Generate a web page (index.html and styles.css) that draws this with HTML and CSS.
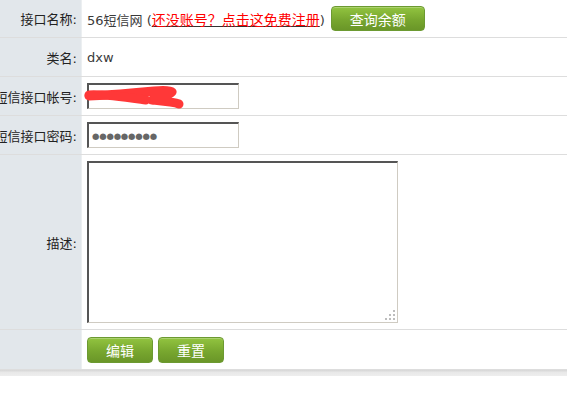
FILE: index.html
```html
<!DOCTYPE html>
<html lang="zh-CN">
<head>
<meta charset="utf-8">
<title>接口设置</title>
<link rel="stylesheet" href="styles.css">
</head>
<body>
<div class="form">
  <div class="row r1">
    <div class="label">接口名称:</div>
    <div class="field">
      <span class="value">56短信网 (<a class="reg" href="#"><span class="red">还没账号？点击这免费注册</span></a>)</span>
      <button class="btn btn-wide" type="button">查询余额</button>
    </div>
  </div>
  <div class="row r2">
    <div class="label">类名:</div>
    <div class="field"><span class="value">dxw</span></div>
  </div>
  <div class="row r3">
    <div class="label">短信接口帐号:</div>
    <div class="field">
      <div class="inwrap">
        <input class="txt" type="text" value="">
        <svg class="scribble" width="110" height="30" viewBox="0 0 110 30">
          <path d="M5 13 C 25 12, 50 10, 70 8 C 80 7, 86 7, 88 9 C 86 12, 75 15, 68 17 C 78 18, 90 19, 95 21" fill="none" stroke="#ff3838" stroke-width="9" stroke-linecap="round" stroke-linejoin="round"/>
          <path d="M5 12 C 20 11, 40 14, 62 17" fill="none" stroke="#ff3838" stroke-width="9" stroke-linecap="round"/>
        </svg>
      </div>
    </div>
  </div>
  <div class="row r4">
    <div class="label">短信接口密码:</div>
    <div class="field"><input class="txt pwd" type="text" readonly value="●●●●●●●●●"></div>
  </div>
  <div class="row r5">
    <div class="label">描述:</div>
    <div class="field">
      <div class="areawrap">
        <textarea class="area"></textarea>
        <svg class="grip" width="12" height="12" viewBox="0 0 12 12">
          <rect x="9" y="1" width="2" height="2" fill="#bdbdbd"/>
          <rect x="5" y="5" width="2" height="2" fill="#bdbdbd"/>
          <rect x="9" y="5" width="2" height="2" fill="#bdbdbd"/>
          <rect x="1" y="9" width="2" height="2" fill="#bdbdbd"/>
          <rect x="5" y="9" width="2" height="2" fill="#bdbdbd"/>
          <rect x="9" y="9" width="2" height="2" fill="#bdbdbd"/>
        </svg>
      </div>
    </div>
  </div>
  <div class="row r6">
    <div class="label"></div>
    <div class="field btns">
      <button class="btn" type="button">编辑</button>
      <button class="btn" type="button">重置</button>
    </div>
  </div>
</div>
<div class="footbar"></div>
</body>
</html>
```
FILE: styles.css
```css
html, body {
  margin: 0;
  padding: 0;
  background: #fff;
  overflow: hidden;
}
body {
  font-family: "DejaVu Sans", "Noto Sans CJK SC", sans-serif;
  font-size: 13px;
  color: #333;
}
.form {
  display: flex;
  flex-direction: column;
}
.row {
  display: grid;
  grid-template-columns: 82px 1fr;
  border-bottom: 1px solid #dddddd;
}
.r1 { height: 37px; }
.r2, .r3, .r4 { height: 38px; }
.r5 { height: 174px; }
.r6 { height: 39px; }
.label {
  background: #e2e7eb;
  border-right: 1px solid #eceff1;
  display: flex;
  align-items: center;
  justify-content: flex-end;
  padding-right: 4px;
  white-space: nowrap;
  min-width: 0;
  font-family: "DejaVu Sans", "Noto Sans CJK SC", sans-serif;
  color: #222;
}
.field {
  display: flex;
  align-items: center;
  padding-left: 5px;
  white-space: nowrap;
}
.value {
  color: #3a3a3a;
}
.reg {
  color: #333;
  text-decoration: underline;
  font-family: "Noto Sans CJK SC", sans-serif;
  font-size: 14px;
}
.red { color: #ff0000; }
.btn {
  height: 26px;
  width: 66px;
  border: 1px solid #6c9a31;
  border-radius: 4px;
  background: linear-gradient(#92c440, #78a72f 55%, #6a9628);
  color: #fff;
  font-family: "Noto Sans CJK SC", sans-serif;
  font-size: 14px;
  padding: 0;
  box-shadow: inset 0 1px 0 rgba(255,255,255,0.25);
}
.btn-wide {
  width: 94px;
  height: 25px;
  margin-left: 6px;
}
.btns {
  gap: 5px;
}
.inwrap, .areawrap {
  position: relative;
  display: flex;
}
.txt {
  box-sizing: border-box;
  width: 152px;
  height: 26px;
  margin: 0;
  border: 1px solid #cfcbc2;
  border-top: 2px solid #555;
  border-left: 2px solid #555;
  background: #fff;
  padding: 0 3px;
  outline: none;
}
.pwd {
  font-family: "DejaVu Sans", sans-serif;
  font-size: 8.5px;
  color: #666;
  letter-spacing: -0.2px;
}
.scribble {
  position: absolute;
  left: -3px;
  top: 0px;
}
.area {
  box-sizing: border-box;
  width: 311px;
  height: 162px;
  margin: 0;
  border: 1px solid #cfcbc2;
  border-top: 2px solid #555;
  border-left: 2px solid #555;
  background: #fff;
  resize: none;
  outline: none;
}
.grip {
  position: absolute;
  right: 2px;
  bottom: 2px;
}
.footbar {
  height: 6px;
  background: linear-gradient(#d6d6d6, #e8e8e8 40%, #eeeeee);
}
```
